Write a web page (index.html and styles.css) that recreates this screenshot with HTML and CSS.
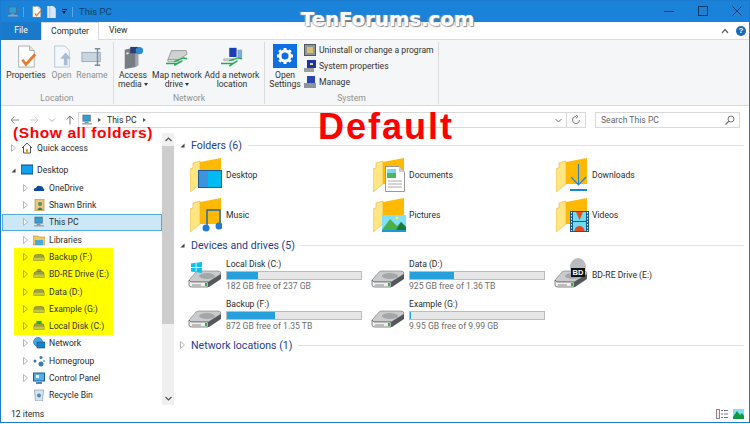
FILE: index.html
```html
<!DOCTYPE html>
<html lang="en">
<head>
<meta charset="utf-8">
<title>This PC</title>
<link rel="stylesheet" href="styles.css">
</head>
<body>
<svg class="defs" width="0" height="0">
  <defs>
    <symbol id="pc" viewBox="0 0 16 16"><rect x="2" y="1" width="11" height="9" fill="#5b6b78"/><rect x="3" y="2" width="9" height="7" fill="#2f9fd8"/><path d="M5 10h5v2H5z" fill="#8a949c"/><path d="M2 12h12l1 2H1z" fill="#9aa4ac"/></symbol>
    <symbol id="folder" viewBox="0 0 32 34"><path d="M10 4L31 0v26H10z" fill="#ffb900"/><path d="M0 11L3 10 3 5 10 3V26L0 34Z" fill="#ffe680" stroke="#e8b040" stroke-width=".6"/></symbol>
    <symbol id="drive" viewBox="0 0 34 18"><path d="M1 10 8 2Q9 1 11 1H30Q33 1 33 4L22 11Q21 12 19 12H3Z" fill="#c9cbcc" stroke="#77797a" stroke-width=".6"/><ellipse cx="19" cy="6" rx="8" ry="3" fill="#a4a7a8"/><path d="M1 10V15Q1 17 4 17H20V12H3Z" fill="#f0f0f0" stroke="#555" stroke-width=".7"/><path d="M20 12 33 4V9L21 17H20Z" fill="#54585a"/><rect x="17" y="13" width="2" height="3" fill="#2bb03a"/><path d="M4 15H13" stroke="#888"/></symbol>
    <symbol id="smalldrive" viewBox="0 0 14 12"><path d="M1 7Q1 3 4 3H10Q13 3 13 7V10H1Z" fill="#9aa044" stroke="#66691e" stroke-width=".6"/><path d="M1 7H13V10H1Z" fill="#c8c83a"/></symbol>
    <symbol id="check" viewBox="0 0 24 26"><path d="M4 1H16L21 6V24H4Z" fill="#fff" stroke="#a8a8a8"/><path d="M16 1V6H21" fill="#e6e6e6" stroke="#a8a8a8"/><path d="M8 16 12 21 22 10" fill="none" stroke="#e8792b" stroke-width="3"/></symbol>
    <symbol id="mapdrive" viewBox="0 0 24 20"><path d="M6 3H22L23 7 14 13H2Z" fill="#d0d2d2" stroke="#666" stroke-width=".6"/><path d="M2 13H14V15H2Z" fill="#eee" stroke="#777" stroke-width=".6"/><path d="M0 17H13M9 15 19 11 23 12M9 19 18 14" stroke="#22aa55" stroke-width="1.6" fill="none"/></symbol>
    <symbol id="arrow" viewBox="0 0 5 8"><path d="M.5.5 4.5 4 .5 7.5Z" fill="#fff" stroke="#a6a6a6" stroke-width=".8"/></symbol>
    <symbol id="arrowy" viewBox="0 0 5 8"><path d="M.5.5 4.5 4 .5 7.5Z" fill="none" stroke="#9a9a30" stroke-width=".8"/></symbol>
    <symbol id="expanded" viewBox="0 0 6 6"><path d="M5.5.5V5.5H.5Z" fill="#444"/></symbol>
  </defs>
</svg>
<div class="window">
  <header class="titlebar">
    <svg class="t-icon"><use href="#pc"/></svg>
    <i class="t-sep"></i>
    <svg class="t-small" viewBox="0 0 24 26"><use href="#check"/></svg>
    <svg class="t-small" viewBox="0 0 12 14"><path d="M1 0H8L11 3V14H1Z" fill="#d9e6f5"/><path d="M4 0V14" stroke="#a8c0dc"/></svg>
    <span class="t-drop"></span>
    <i class="t-sep"></i>
    <span class="t-title">This PC</span>
    <div class="controls">
      <svg width="10" height="10" viewBox="0 0 10 10"><path d="M0 5.500H10" stroke="#103a60"/></svg>
      <svg width="10" height="10" viewBox="0 0 10 10"><rect x=".5" y=".5" width="9" height="9" fill="none" stroke="#103a60"/></svg>
      <svg width="10" height="10" viewBox="0 0 10 10"><path d="M.5.5 9.500 9.500M9.500.5.5 9.500" stroke="#103a60"/></svg>
    </div>
  </header>

  <nav class="tabs">
    <span class="tab-file">File</span>
    <span class="tab-active">Computer</span>
    <span class="tab">View</span>
    <div class="tab-right">
      <svg width="8" height="6" viewBox="0 0 8 6"><path d="M1 5 4 1.500 7 5" fill="none" stroke="#666" stroke-width="1.200"/></svg>
      <span class="help">?</span>
    </div>
  </nav>

  <section class="ribbon">
    <div class="group g-location">
      <div class="tools">
        <div class="tool w-prop"><svg class="ico" viewBox="0 0 24 26"><use href="#check"/></svg><span>Properties</span></div>
        <div class="tool w-open off"><svg class="ico" viewBox="0 0 24 26"><path d="M4 1H15L20 6V24H4Z" fill="#f4f7fb" stroke="#b8c4d2"/><path d="M14 22V15H10L16 8 22 15H18V22Z" fill="#a9bcd2"/></svg><span>Open</span></div>
        <div class="tool w-ren off"><svg class="ico" viewBox="0 0 24 24"><rect x="1" y="7" width="20" height="10" fill="#c8d4e0" stroke="#9aa8b6"/><path d="M15 3H21M18 3V21M15 21H21" stroke="#7d8b99" stroke-width="1.500" fill="none"/></svg><span>Rename</span></div>
      </div>
      <div class="group-label">Location</div>
    </div>
    <div class="group g-network">
      <div class="tools">
        <div class="tool w-access"><svg class="ico" viewBox="0 0 24 26"><path d="M3 5 15 2V24L3 26Z" fill="#777d82"/><path d="M15 2 18 4V22L15 24Z" fill="#a0a6aa"/><rect x="9" y="2" width="9" height="7" fill="#2d3f70"/><circle cx="19" cy="6" r="4" fill="#2a8ad4"/><circle cx="6" cy="9" r="1.300" fill="#ddd"/></svg><span>Access<br>media <b class="caret"></b></span></div>
        <div class="tool w-map"><svg class="ico" viewBox="0 0 24 20"><use href="#mapdrive"/></svg><span>Map network<br>drive <b class="caret"></b></span></div>
        <div class="tool w-add"><svg class="ico" viewBox="0 0 24 22"><rect x="9" y="1" width="8" height="10" fill="#1a3fb0"/><rect x="18" y="3" width="5" height="9" fill="#7fa8d8"/><path d="M3 13H14V15H3Z" fill="#ddd" stroke="#777" stroke-width=".5"/><path d="M0 18H13M9 15 19 12 23 13M9 21 18 15" stroke="#22aa55" stroke-width="1.600" fill="none"/></svg><span>Add a network<br>location</span></div>
      </div>
      <div class="group-label">Network</div>
    </div>
    <div class="group g-system">
      <div class="tools">
        <div class="tool w-set">
          <svg class="ico-set" viewBox="0 0 24 24"><rect width="24" height="24" fill="#0f6fe0"/><circle cx="12" cy="12" r="5" fill="none" stroke="#fff" stroke-width="3"/><path d="M12 4V7M12 17V20M4 12H7M17 12H20M6.300 6.300 8.500 8.500M15.500 15.500 17.700 17.700M17.700 6.300 15.500 8.500M8.500 15.500 6.300 17.700" stroke="#fff" stroke-width="3"/></svg>
          <span>Open<br>Settings</span>
        </div>
        <ul class="small-tools">
          <li><svg width="12" height="12" viewBox="0 0 12 12"><rect x=".5" y=".5" width="11" height="11" fill="#8a9aa0" stroke="#555"/><rect x="3" y="3" width="6" height="6" fill="#d8c070"/></svg>Uninstall or change a program</li>
          <li><svg width="12" height="12" viewBox="0 0 12 12"><rect x="3" y="0" width="9" height="8" fill="#2030a8"/><rect x="0" y="8" width="10" height="4" fill="#9aa0a0"/><path d="M6 3H9V5H6Z" fill="#e8e070"/></svg>System properties</li>
          <li><svg width="12" height="12" viewBox="0 0 12 12"><rect x="3" y="0" width="8" height="7" fill="#2b45b0"/><rect x="0" y="7" width="12" height="5" fill="#8d959a"/></svg>Manage</li>
        </ul>
      </div>
      <div class="group-label">System</div>
    </div>
  </section>

  <div class="address-row">
    <div class="nav-arrows">
      <svg width="10" height="10" viewBox="0 0 10 10"><path d="M9 5H1M4.500 1.500 1 5 4.500 8.500" fill="none" stroke="#8a8a8a"/></svg>
      <svg width="10" height="10" viewBox="0 0 10 10"><path d="M1 5H9M5.500 1.500 9 5 5.500 8.500" fill="none" stroke="#d0d0d0"/></svg>
      <svg width="8" height="6" viewBox="0 0 8 6"><path d="M1 1.500 4 4.500 7 1.500" fill="none" stroke="#b0b0b0"/></svg>
      <svg width="10" height="10" viewBox="0 0 10 10"><path d="M5 9.500V1M1.500 4.500 5 1 8.500 4.500" fill="none" stroke="#777"/></svg>
    </div>
    <div class="address">
      <svg class="addr-pc"><use href="#pc"/></svg>
      <b class="crumb"></b>
      <span>This PC</span>
      <b class="crumb"></b>
      <svg class="addr-down" width="7" height="5" viewBox="0 0 7 5"><path d="M.5 1 3.500 4 6.500 1" fill="none" stroke="#777"/></svg>
      <i class="addr-sep"></i>
      <svg class="addr-refresh" width="10" height="10" viewBox="0 0 10 10"><path d="M8.500 5A3.500 3.500 0 1 1 5 1.500M5 0 7 1.500 5 3" fill="none" stroke="#777"/></svg>
    </div>
    <div class="search">
      <span>Search This PC</span>
      <svg width="10" height="10" viewBox="0 0 10 10"><circle cx="6" cy="4" r="3" fill="none" stroke="#777"/><path d="M4 6 .5 9.500" stroke="#777" stroke-width="1.200"/></svg>
    </div>
  </div>

  <div class="main">
    <aside class="sidebar">
      <ul class="tree">
        <li class="row quick"><svg class="tw"><use href="#arrow"/></svg><svg class="ni" viewBox="0 0 12 12"><path d="M1 6 6 1 11 6M2.500 5V11H9.500V5" fill="#fff" stroke="#555"/><rect x="5" y="7" width="2" height="4" fill="#e0a030"/></svg>Quick access</li>
        <li class="row desk"><svg class="tw"><use href="#expanded"/></svg><svg class="ni" viewBox="0 0 12 12"><rect x="0" y="1" width="12" height="9" fill="#10a0f0" stroke="#0d4a8a"/></svg>Desktop</li>
        <li class="row l2"><svg class="tw"><use href="#arrow"/></svg><svg class="ni" viewBox="0 0 12 12"><path d="M1 9Q0 6 3 6 4 3 7 4 10 4 10 6 12 7 11 9Z" fill="#0f4a9e"/></svg>OneDrive</li>
        <li class="row l2"><svg class="tw"><use href="#arrow"/></svg><svg class="ni" viewBox="0 0 12 12"><rect x="2" y="0" width="9" height="12" fill="#e8c878" stroke="#a08040" stroke-width=".6"/><circle cx="7" cy="5" r="2" fill="#5a8a6a"/><path d="M4 11Q7 6 10 11Z" fill="#3a7a5a"/></svg>Shawn Brink</li>
        <li class="row l2 selected"><svg class="tw"><use href="#arrow"/></svg><svg class="ni" viewBox="0 0 16 16"><use href="#pc"/></svg>This PC</li>
        <li class="row l2"><svg class="tw"><use href="#arrow"/></svg><svg class="ni" viewBox="0 0 12 12"><path d="M0 2H5L6 3H12V11H0Z" fill="#f0c860" stroke="#c09030" stroke-width=".6"/><rect x="2" y="6" width="8" height="5" fill="#4aa8d8"/></svg>Libraries</li>
        <li class="yellow">
          <ul>
            <li class="row l2 hl"><svg class="tw"><use href="#arrowy"/></svg><svg class="ni" viewBox="0 0 14 12"><use href="#smalldrive"/></svg>Backup (F:)</li>
            <li class="row l2 hl"><svg class="tw"><use href="#arrowy"/></svg><svg class="ni" viewBox="0 0 14 12"><circle cx="7" cy="3" r="3" fill="#a0a040"/><use href="#smalldrive"/></svg>BD-RE Drive (E:)</li>
            <li class="row l2 hl"><svg class="tw"><use href="#arrowy"/></svg><svg class="ni" viewBox="0 0 14 12"><use href="#smalldrive"/></svg>Data (D:)</li>
            <li class="row l2 hl"><svg class="tw"><use href="#arrowy"/></svg><svg class="ni" viewBox="0 0 14 12"><use href="#smalldrive"/></svg>Example (G:)</li>
            <li class="row l2 hl"><svg class="tw"><use href="#arrowy"/></svg><svg class="ni" viewBox="0 0 14 12"><rect x="4" y="0" width="6" height="7" fill="#22aa22"/><use href="#smalldrive"/></svg>Local Disk (C:)</li>
          </ul>
        </li>
        <li class="row l2"><svg class="tw"><use href="#arrow"/></svg><svg class="ni" viewBox="0 0 12 12"><circle cx="5" cy="5" r="4.500" fill="#4aa8e0" stroke="#1a6ab0" stroke-width=".6"/><rect x="4" y="5" width="8" height="6" fill="#1a80c8" stroke="#104a80" stroke-width=".6"/></svg>Network</li>
        <li class="row l2"><svg class="tw"><use href="#arrow"/></svg><svg class="ni" viewBox="0 0 12 12"><circle cx="2" cy="6" r="1.500" fill="#3a78b8"/><circle cx="8" cy="2.500" r="1.500" fill="#3a78b8"/><circle cx="8" cy="9" r="2.500" fill="#3a78b8"/><circle cx="11" cy="6" r="1" fill="#6aa0d0"/></svg>Homegroup</li>
        <li class="row l2"><svg class="tw"><use href="#arrow"/></svg><svg class="ni" viewBox="0 0 12 12"><rect x=".5" y="1" width="11" height="8" fill="#5aaee8" stroke="#1a5a98"/><path d="M3 11H9" stroke="#1a5a98" stroke-width="1.500"/><path d="M3 3H6V6H3Z" fill="#f0f0f0"/></svg>Control Panel</li>
        <li class="row l2 no-tw"><svg class="ni" viewBox="0 0 12 12"><path d="M1.500 1H10.500L9.500 12H2.500Z" fill="#d8e4ec" stroke="#8a9aa8" stroke-width=".7"/><circle cx="6" cy="6.500" r="2" fill="#4a88c0"/></svg>Recycle Bin</li>
      </ul>
      <div class="scrollbar">
        <svg class="sb-arrow" width="7" height="5" viewBox="0 0 7 5"><path d="M.5 4 3.500 1 6.500 4" fill="none" stroke="#555" stroke-width="1.200"/></svg>
        <div class="sb-thumb"></div>
        <div class="sb-track"></div>
        <svg class="sb-arrow" width="7" height="5" viewBox="0 0 7 5"><path d="M.5 1 3.500 4 6.500 1" fill="none" stroke="#555" stroke-width="1.200"/></svg>
      </div>
    </aside>

    <section class="content">
      <h2 class="sec"><svg class="sec-tw"><use href="#expanded"/></svg><span>Folders (6)</span><i></i></h2>
      <div class="grid folders">
        <div class="item"><div class="ficon"><svg class="f-base"><use href="#folder"/></svg><svg class="f-over" viewBox="0 0 24 18"><rect x=".5" y=".5" width="23" height="17" fill="#00baf2" stroke="#1a5a9a"/><rect x="1" y="1" width="9" height="16" fill="#3d93dc"/></svg></div><span>Desktop</span></div>
        <div class="item"><div class="ficon"><svg class="f-base"><use href="#folder"/></svg><svg class="f-over doc" viewBox="0 0 20 26"><path d="M.5.5H14L19.500 6V25.500H.5Z" fill="#fff" stroke="#999"/><path d="M14 .5V6H19.500Z" fill="#ccc"/><rect x="2" y="3" width="9" height="9" fill="#4bb85a"/><rect x="2" y="3" width="9" height="4" fill="#7fd4f0"/><path d="M3 15H17M3 18H17M3 21H17" stroke="#aaa"/></svg></div><span>Documents</span></div>
        <div class="item"><div class="ficon"><svg class="f-base"><use href="#folder"/></svg><svg class="f-over dl" viewBox="0 0 17 28"><path d="M8.500 1V22M1 14 8.500 22 16 14" fill="none" stroke="#1f84d8" stroke-width="1.100"/><rect x="0" y="26" width="17" height="2" fill="#1f84d8"/></svg></div><span>Downloads</span></div>
        <div class="item"><div class="ficon"><svg class="f-base"><use href="#folder"/></svg><svg class="f-over mus" viewBox="0 0 20 24"><path d="M5 19V2H18V18" fill="none" stroke="#1565b8" stroke-width="1.400"/><circle cx="4" cy="20" r="3.500" fill="#1f7ad0"/><circle cx="17" cy="18" r="3.500" fill="#1f7ad0"/></svg></div><span>Music</span></div>
        <div class="item"><div class="ficon"><svg class="f-base"><use href="#folder"/></svg><svg class="f-over pic" viewBox="0 0 24 17"><rect width="24" height="17" fill="#7fe0f8"/><path d="M0 15 8 4 15 11 19 7 24 12V17H0Z" fill="#4bb04a"/><path d="M14 15 19 7 24 12V15Z" fill="#1a7a3a"/><rect y="15" width="24" height="2" fill="#1a9ad8"/><circle cx="15" cy="3" r="1.500" fill="#ffe860"/></svg></div><span>Pictures</span></div>
        <div class="item"><div class="ficon"><svg class="f-base"><use href="#folder"/></svg><svg class="f-over vid" viewBox="0 0 19 21"><rect width="19" height="21" fill="#1a5a8a"/><rect x="3" y="1" width="13" height="9" fill="#70dcf0"/><rect x="3" y="11" width="13" height="9" fill="#70dcf0"/><path d="M6 1H13L9.500 9Z" fill="#e84a20"/><circle cx="9.500" cy="20" r="5" fill="#e84a20"/><rect x="3" y="20" width="13" height="1" fill="#1a5a8a"/><path d="M1.500 1V20M17.500 1V20" stroke="#fff" stroke-dasharray="1.500 1.500"/></svg></div><span>Videos</span></div>
      </div>

      <h2 class="sec s2"><svg class="sec-tw"><use href="#expanded"/></svg><span>Devices and drives (5)</span><i></i></h2>
      <div class="grid drives">
        <div class="item drive"><div class="dicon"><svg class="d-base"><use href="#drive"/></svg><svg class="win" viewBox="0 0 14 14"><path d="M0 2 6 1V6.500H0ZM7 1 14 0V6.500H7ZM0 7.500H6V13L0 12ZM7 7.500H14V14L7 13Z" fill="#0ac2ee"/></svg></div><div class="dinfo"><span>Local Disk (C:)</span><div class="bar"><div class="fill" style="width:23%"></div></div><small>182 GB free of 237 GB</small></div></div>
        <div class="item drive"><div class="dicon"><svg class="d-base"><use href="#drive"/></svg></div><div class="dinfo"><span>Data (D:)</span><div class="bar"><div class="fill" style="width:33%"></div></div><small>925 GB free of 1.36 TB</small></div></div>
        <div class="item drive solo"><div class="dicon"><div class="disc"></div><svg class="d-base"><use href="#drive"/></svg><b class="bd">BD</b></div><span>BD-RE Drive (E:)</span></div>
        <div class="item drive"><div class="dicon"><svg class="d-base"><use href="#drive"/></svg></div><div class="dinfo"><span>Backup (F:)</span><div class="bar"><div class="fill" style="width:36%"></div></div><small>872 GB free of 1.35 TB</small></div></div>
        <div class="item drive"><div class="dicon"><svg class="d-base"><use href="#drive"/></svg></div><div class="dinfo"><span>Example (G:)</span><div class="bar"><div class="fill" style="width:1%"></div></div><small>9.95 GB free of 9.99 GB</small></div></div>
      </div>

      <h2 class="sec s3"><svg class="sec-tw"><use href="#arrow"/></svg><span>Network locations (1)</span><i></i></h2>
    </section>
  </div>

  <footer class="status">
    <span>12 items</span>
    <div class="views">
      <svg width="12" height="10" viewBox="0 0 12 10"><rect x=".5" y=".5" width="3" height="9" fill="#f8e8e8" stroke="#888"/><path d="M5 1.500H7M8 1.500H12M5 5H7M8 5H12M5 8.500H7M8 8.500H12" stroke="#777"/></svg>
      <svg width="11" height="10" viewBox="0 0 11 10"><rect width="11" height="10" fill="#80e0f0"/><path d="M0 8 4 2 7 6 9 4 11 7V10H0Z" fill="#109a40"/></svg>
    </div>
  </footer>

  <div class="watermark">TenForums.com</div>
  <div class="note-default">Default</div>
  <div class="note-show">(Show all folders)</div>
</div>
</body>
</html>
```
FILE: styles.css
```css
* { box-sizing: border-box; }
html, body { margin: 0; padding: 0; }
body { width: 750px; height: 424px; overflow: hidden; background: #fff; font: 8.6px Roboto, "Noto Sans", sans-serif; color: #2a2a2a; }
ul { list-style: none; margin: 0; padding: 0; }
svg { display: block; flex: none; }
.defs { position: absolute; }
.window { position: relative; width: 750px; height: 423px; display: flex; flex-direction: column; border: 1px solid #1a7bcf; overflow: hidden; }

.titlebar { height: 21px; background: #1a82d8; display: flex; align-items: center; padding-left: 6px; flex: none; color: #123f68; }
.t-icon { width: 12px; height: 12px; }
.t-sep { width: 1px; height: 10px; background: #5aa6e4; margin: 0 7px 0 4px; }
.t-small { width: 11px; height: 12px; margin-right: 4px; }
.t-drop { width: 5px; height: 5px; margin: 0 1px; border-top: 1px solid #111; position: relative; }
.t-drop::after { content: ""; position: absolute; left: 0; top: 1px; border: 2.500px solid transparent; border-top: 3px solid #111; border-bottom: 0; }
.t-title { font-size: 9.500px; margin-left: -1px; }
.controls { margin-left: auto; display: flex; gap: 24px; padding-right: 7px; margin-top: -2px; }

.tabs { height: 18px; background: #fff; display: flex; align-items: stretch; flex: none; border-bottom: 1px solid #dadbdc; }
.tab-file { width: 40px; background: #1979ca; color: #fff; text-align: center; line-height: 17px; margin-bottom: -1px; }
.tab-active { width: 58px; border: 1px solid #dadbdc; border-bottom: 0; text-align: center; line-height: 17px; margin-bottom: -1px; position: relative; background: #fff; }
.tab { margin-left: 10px; line-height: 17px; }
.tab-right { margin-left: auto; display: flex; align-items: center; gap: 7px; padding-right: 3px; }
.help { width: 10px; height: 10px; border-radius: 50%; background: #1668b8; color: #fff; font: bold 8px/10px "Liberation Sans", sans-serif; text-align: center; }

.ribbon { height: 66px; background: #f5f6f7; border-bottom: 1px solid #dadbdc; display: flex; flex: none; color: #333; padding-top: 2px; }
.group { display: flex; flex-direction: column; border-right: 1px solid #dadbdc; margin-bottom: 1px; }
.g-location { width: 113px; }
.g-network { width: 151px; }
.g-system { width: 174px; }
.tools { display: flex; height: 50px; flex: none; }
.group-label { height: 12px; text-align: center; color: #909090; line-height: 12px; }
.tool { display: flex; flex-direction: column; align-items: center; text-align: center; line-height: 9px; white-space: nowrap; }
.tool .ico { width: 22px; height: 24px; margin-top: 3px; margin-bottom: 2px; }
.tool .ico-set { width: 24px; height: 24px; margin-top: 2px; margin-bottom: 3px; }
.off { color: #8e8e8e; }
.w-prop { width: 50px; }
.w-open { width: 21px; }
.w-ren { width: 40px; }
.w-access { width: 38px; }
.w-map { width: 50px; }
.w-add { width: 60px; }
.w-set { width: 40px; }
.caret { display: inline-block; border: 2.500px solid transparent; border-top: 3px solid #333; border-bottom: 0; vertical-align: 1px; }
.small-tools { display: flex; flex-direction: column; }
.small-tools li { height: 16px; display: flex; align-items: center; gap: 3px; white-space: nowrap; margin-left: -1px; }

.address-row { height: 27px; flex: none; display: flex; align-items: center; background: #fff; padding-top: 1px; }
.nav-arrows { width: 77px; display: flex; align-items: center; padding-left: 9px; gap: 9px; }
.address { width: 508px; height: 16px; border: 1px solid #d9d9d9; display: flex; align-items: center; padding-left: 2px; }
.addr-pc { width: 12px; height: 12px; margin-right: 5px; }
.crumb { width: 0; height: 0; border: 2.500px solid transparent; border-left: 3px solid #555; border-right: 0; margin-right: 6px; }
.address span { margin-right: 6px; }
.addr-down { margin-left: auto; margin-right: 4px; }
.addr-sep { width: 1px; height: 14px; background: #d9d9d9; }
.addr-refresh { margin: 0 4px; }
.search { width: 145px; height: 16px; border: 1px solid #d9d9d9; margin-left: 9px; display: flex; align-items: center; justify-content: space-between; padding: 0 4px 0 5px; color: #666; }

.main { flex: 1; display: flex; min-height: 0; }
.sidebar { width: 173px; display: flex; flex: none; border-right: 1px solid #e6e6e6; }
.tree { width: 161px; padding-top: 6px; flex: none; }
.row { height: 17.300px; display: flex; align-items: center; white-space: nowrap; padding-left: 10px; }
.row.quick { margin-bottom: 5.500px; }
.row.l2 { padding-left: 22px; }
.row.no-tw { padding-left: 32px; }
.tw { width: 5px; height: 8px; margin-right: 5px; }
.desk .tw { height: 5px; }
.ni { width: 12px; height: 12px; margin-right: 4px; }
.selected { background: #cce8f7; border: 1px solid #53a9d8; margin-left: 1px; padding-left: 20px !important; }
.yellow { margin-left: 13px; width: 99px; background: #ffff00; }
.yellow .row { padding-left: 9px; color: #333; }

.scrollbar { width: 12px; display: flex; flex-direction: column; align-items: center; background: #f0f0f0; flex: none; }
.sb-arrow { margin: 4px 0; }
.sb-thumb { width: 100%; height: 178px; background: #cdcdcd; }
.sb-track { flex: 1; }

.content { flex: 1; padding: 5px 0 0 6px; min-width: 0; }
.sec { display: flex; align-items: center; font-size: 10.600px; font-weight: 400; color: #1e3d8f; margin: 0; height: 14px; }
.sec-tw { width: 5px; height: 5px; margin-right: 6px; }
.s3 .sec-tw { height: 8px; }
.sec i { flex: 1; height: 1px; background: #e2e2e2; margin: 0 5px 0 6px; }
.s2, .s3 { margin-top: 3px; }
.grid { display: grid; grid-template-columns: repeat(3, 183px); }
.folders { grid-auto-rows: 40px; padding: 3px 0 0 10px; }
.drives { grid-auto-rows: 40px; padding: 3px 0 0 8px; }
.item { display: flex; align-items: center; }
.ficon { position: relative; width: 32px; height: 34px; margin-right: 4px; flex: none; }
.f-base { width: 32px; height: 34px; }
.f-over { position: absolute; left: 8px; bottom: 4px; width: 24px; height: 18px; }
.f-over.doc { left: 12px; bottom: 0; width: 20px; height: 26px; }
.f-over.dl { left: 14px; bottom: 1px; width: 17px; height: 28px; }
.f-over.mus { left: 12px; bottom: 0; width: 20px; height: 24px; }
.f-over.pic { left: 9px; bottom: 0; width: 24px; height: 17px; }
.f-over.vid { left: 14px; bottom: 0; width: 19px; height: 21px; }

.dicon { position: relative; width: 34px; height: 30px; margin-right: 4px; flex: none; }
.d-base { position: absolute; left: 0; bottom: 2px; width: 34px; height: 18px; }
.win { position: absolute; left: 2px; top: 2px; width: 13px; height: 11px; }
.dinfo { width: 136px; line-height: 11px; display: flex; flex-direction: column; }
.bar { height: 9px; border: 1px solid #bcbcbc; background: #e6e6e6; margin: 1px 0; }
.fill { height: 100%; background: #26a0da; }
.dinfo small { font-size: 8.600px; color: #6d6d6d; }
.disc { position: absolute; left: 16px; top: -2px; width: 16px; height: 18px; border-radius: 50%; background: #b8bcc0; }
.bd { position: absolute; left: 17px; top: 8px; width: 14px; height: 9px; background: #111; color: #fff; font: bold 7.500px/9px "Liberation Sans", sans-serif; text-align: center; }

.status { height: 17px; flex: none; display: flex; align-items: center; justify-content: space-between; padding: 0 5px 0 10px; background: #fff; }
.views { display: flex; gap: 5px; }

.watermark { position: absolute; left: 300px; top: 8px; font: bold 19.700px/22px "DejaVu Sans", sans-serif; color: #fff; text-shadow: 1px 1px 1px #8a8a8a, -1px 0 1px #bbb; }
.note-default { position: absolute; left: 317px; top: 108px; font: bold 36px/36px "Liberation Sans", sans-serif; letter-spacing: 2px; color: #f00; }
.note-show { position: absolute; left: 12px; top: 123px; font: bold 15.500px/18px "Liberation Sans", sans-serif; letter-spacing: .6px; color: #f00; white-space: nowrap; }
```
